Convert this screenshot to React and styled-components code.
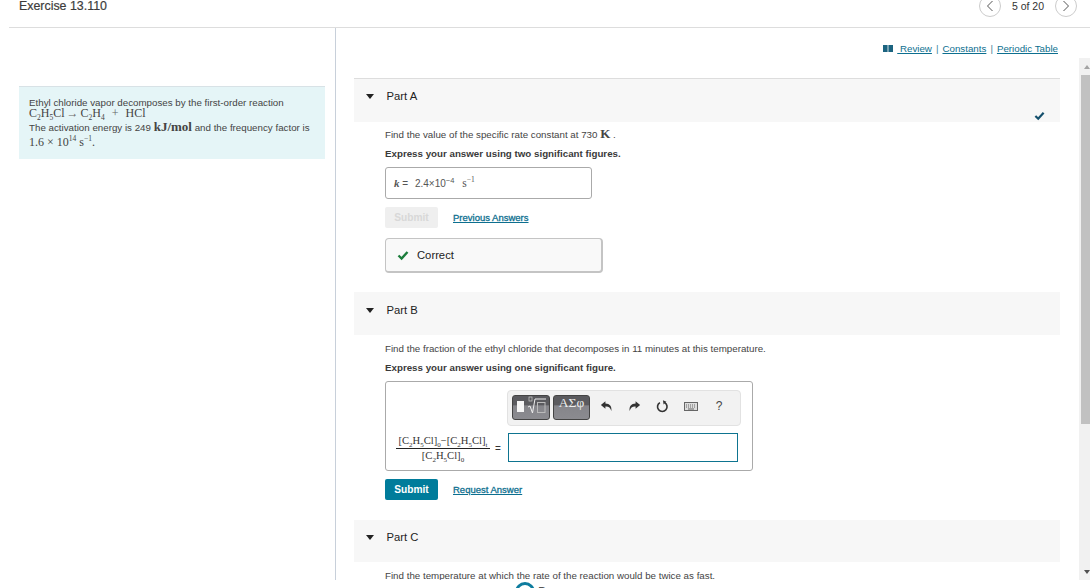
import styled, { createGlobalStyle } from "styled-components";
import { Fragment } from "react";

const Global = createGlobalStyle`
  html, body { margin: 0; padding: 0; background: #fff; overflow: hidden; }
  body { font-family: "Liberation Sans", Arial, sans-serif; color: #333; }
`;

const Page = styled.div`
  width: 1090px;
  height: 588px;
  overflow: hidden;
  display: flex;
  flex-direction: column;
`;
const Header = styled.header`
  height: 28px;
  box-sizing: border-box;
  margin-left: 9px;
  border-bottom: 1px solid #ddd;
  display: flex;
  align-items: flex-start;
  justify-content: space-between;
  flex: none;
`;
const Title = styled.div`
  margin-left: 10px;
  font-size: 12.4px;
  line-height: 12px;
  color: #3c3c3c;
  -webkit-text-stroke: 0.2px #3c3c3c;
`;
const Pager = styled.div`
  display: flex;
  align-items: flex-start;
  margin: -5px 13px 0 0;
  font-size: 10.5px;
  color: #333;
`;
const PageLabel = styled.span`
  margin: 5px 11px 0 11px;
  line-height: 12px;
`;
const PageButton = styled.span`
  width: 20px;
  height: 20px;
  border: 1px solid #ccc;
  border-radius: 50%;
  display: flex;
  align-items: center;
  justify-content: center;
  svg { display: block; }
`;
const Body = styled.div`
  height: 552px;
  display: flex;
  flex: none;
`;
const LeftPane = styled.aside`
  width: 336px;
  flex: none;
  box-sizing: border-box;
  padding: 58px 10px 0 19px;
  border-right: 1px solid #c8d0da;
`;
const Intro = styled.div`
  background: #e5f5f7;
  border-top: 1px solid #d8e2e6;
  height: 73px;
  box-sizing: border-box;
  padding: 10px 10px 0 10px;
  font-size: 9.75px;
  color: #444;
`;
const IntroLine = styled.div`
  line-height: ${p => p.$lh}px;
  white-space: nowrap;
`;
const MathRow = styled.div`
  font-family: "Liberation Serif", serif;
  font-size: 12px;
  line-height: ${p => p.$lh}px;
  color: #444;
  white-space: nowrap;
  sub, sup { font-size: 7.5px; line-height: 0; }
`;
const Op = styled.span`
  margin: 0 ${p => p.$gap}px;
  color: #666;
`;
const M = styled.span`
  font-family: "Liberation Serif", serif;
  font-size: ${p => p.$size || 12}px;
  font-style: ${p => (p.$italic ? "italic" : "normal")};
  font-weight: ${p => (p.$bold ? 700 : 400)};
  sup { font-size: 7.5px; line-height: 0; }
`;
const RightPane = styled.main`
  flex: 1;
  min-width: 0;
  display: flex;
  justify-content: space-between;
`;
const Content = styled.div`
  width: 724px;
  height: 552px;
  overflow: hidden;
  flex: none;
`;
const TopLinks = styled.div`
  height: 50px;
  padding: 15px 2px 0 0;
  box-sizing: border-box;
  display: flex;
  justify-content: flex-end;
  font-size: 9.75px;
  line-height: 12px;
  color: #3d7f99;
  svg { margin-top: 2px; }
`;
const TextLink = styled.a`
  color: #0d6f8f;
  text-decoration: underline;
  margin-left: ${p => p.$ml || 0}px;
  font-size: ${p => (p.$strong ? 9.5 : 9.75)}px;
  -webkit-text-stroke: ${p => (p.$strong ? "0.3px #0d6f8f" : "0")};
  white-space: pre;
`;
const Sep = styled.span`
  margin: 0 4px;
`;
const Part = styled.section`
  margin-left: 18px;
  width: 706px;
`;
const PartBar = styled.div`
  height: ${p => p.$h}px;
  background: #f7f7f7;
  border-top: ${p => (p.$line ? "1px solid #ddd" : "0")};
  position: relative;
  display: flex;
  align-items: flex-start;
  padding: ${p => p.$top}px 0 0 12px;
  box-sizing: border-box;
  font-size: 11.25px;
  line-height: 13px;
  color: #222;
`;
const Caret = styled.span`
  width: 0;
  height: 0;
  border-left: 4.5px solid transparent;
  border-right: 4.5px solid transparent;
  border-top: 5px solid #222;
  margin: 4px 12.5px 0 0;
`;
const DoneTick = styled.span`
  position: absolute;
  right: 15px;
  bottom: 1px;
  line-height: 0;
`;
const PartBody = styled.div`
  padding: ${p => p.$top}px 0 0 31px;
  height: ${p => p.$h}px;
  box-sizing: border-box;
`;
const Prompt = styled.div`
  font-size: 9.75px;
  line-height: 12px;
  color: #444;
  white-space: nowrap;
`;
const Instruction = styled.div`
  font-size: 9.75px;
  font-weight: 700;
  line-height: 12px;
  margin-top: 7px;
  color: #3a3a3a;
`;
const AnswerBox = styled.div`
  width: 207px;
  height: 32px;
  margin-top: 7px;
  border: 1px solid #aaa;
  border-radius: 3px;
  box-sizing: border-box;
  padding: 0 0 0 8px;
  font-size: 10px;
  line-height: 30px;
  color: #555;
  white-space: nowrap;
  sup { font-size: 7.5px; line-height: 0; }
`;
const Gap = styled.span`
  margin-left: ${p => p.$w}px;
`;
const Actions = styled.div`
  display: flex;
  align-items: center;
  margin-top: ${p => p.$mt}px;
`;
const SubmitButton = styled.span`
  width: 53px;
  height: 21px;
  border-radius: 2px;
  display: flex;
  align-items: center;
  justify-content: center;
  font-size: 10.2px;
  font-weight: 700;
  background: ${p => (p.$off ? "#efefef" : "#007c9b")};
  color: ${p => (p.$off ? "#d8d8d8" : "#fff")};
  margin-right: 15px;
`;
const Feedback = styled.div`
  width: 218px;
  height: 35px;
  margin-top: 10px;
  border: 1px solid #c4c4c4;
  border-right-width: 2px;
  border-bottom-width: 2px;
  border-radius: 4px;
  background: #f9f9f9;
  display: flex;
  align-items: center;
  padding-left: 11px;
  box-sizing: border-box;
  font-size: 11.25px;
  color: #222;
  svg { margin-right: 8px; }
`;
const EditorBox = styled.div`
  width: 368px;
  height: 90px;
  margin-top: 7px;
  border: 1px solid #aaa;
  border-radius: 3px;
  box-sizing: border-box;
  padding: 8px 0 0 7px;
`;
const Toolbar = styled.div`
  width: 234px;
  height: 36px;
  margin-left: 114px;
  background: #f2f2f2;
  border: 1px solid #e2e2e2;
  border-radius: 4px;
  box-sizing: border-box;
  display: flex;
  align-items: center;
  padding-left: 4px;
`;
const PaletteButton = styled.span`
  width: ${p => p.$w}px;
  height: 25px;
  margin: 0 3px 1px 0;
  border-radius: 3px;
  border: 1px solid #444;
  box-sizing: border-box;
  background: linear-gradient(#5b5b5f 0, #5b5b5f 40%, #85858a 42%, #8b8b90 100%);
  color: #eee;
  display: flex;
  align-items: flex-start;
  justify-content: center;
  font-family: "Liberation Serif", serif;
  font-size: 13.5px;
  line-height: 1;
  white-space: nowrap;
`;
const PaletteGlyph = styled.svg`
  display: block;
  flex: none;
`;
const Tools = styled.div`
  display: flex;
  align-items: center;
  margin: 0 0 4px -1px;
`;
const ToolIcon = styled.span`
  width: 28.25px;
  display: flex;
  justify-content: center;
  font-size: 12px;
  color: #444;
`;
const EquationRow = styled.div`
  display: flex;
  align-items: center;
  margin-top: 7px;
`;
const Fraction = styled.div`
  width: 94px;
  margin-left: 3px;
  text-align: center;
  font-family: "Liberation Serif", serif;
  font-size: 10.6px;
  color: #333;
  sub { font-size: 7px; line-height: 0; }
`;
const FractionTop = styled.div`
  border-bottom: 1px solid #222;
  line-height: 13px;
  padding-bottom: 1px;
  white-space: nowrap;
`;
const FractionBottom = styled.div`
  line-height: 13px;
`;
const EqualSign = styled.span`
  font-size: 10px;
  margin: 2px 7px 0 5px;
  color: #333;
`;
const MathInput = styled.div`
  width: 230px;
  height: 29px;
  border: 1px solid #0e7490;
  box-sizing: border-box;
  background: #fff;
`;
const Scrollbar = styled.div`
  width: 11px;
  margin-top: 30px;
  height: 522px;
  background: #f1f1f1;
  display: flex;
  flex-direction: column;
  align-items: flex-end;
  flex: none;
`;
const ScrollArrow = styled.span`
  height: 17px;
  width: 7px;
  flex: none;
  display: flex;
  align-items: center;
  justify-content: center;
  &::before {
    content: "";
    border-left: 3.5px solid transparent;
    border-right: 3.5px solid transparent;
    ${p => (p.$down ? "border-top: 4px solid #505050;" : "border-bottom: 4px solid #a3a3a3;")}
  }
`;
const ScrollThumb = styled.div`
  width: 9px;
  height: 349px;
  flex: none;
  background: #c1c1c1;
`;
const ScrollGap = styled.div`
  flex: 1;
`;
const Footer = styled.footer`
  height: 8px;
  flex: none;
  overflow: hidden;
  display: flex;
  align-items: flex-start;
  padding: 2px 0 0 515px;
  box-sizing: border-box;
`;
const FooterLogo = styled.span`
  width: 20px;
  height: 20px;
  flex: none;
  border: 3px solid #0d7c9e;
  border-radius: 50%;
  box-sizing: border-box;
`;
const FooterName = styled.span`
  margin: 3px 0 0 3px;
  font-size: 12px;
  line-height: 14px;
  color: #555;
`;

const Tick = ({ color = "#1f6f43", size = 12 }) => (
  <svg width={size} height={size} viewBox="0 0 12 12">
    <path d="M1.5 6.5 L4.6 9.5 L10.5 3" fill="none" stroke={color} strokeWidth="2.4" />
  </svg>
);
const Chevron = ({ dir }) => (
  <svg width="8" height="12" viewBox="0 0 8 12">
    <path d={dir === "left" ? "M6.5 1 L1.5 6 L6.5 11" : "M1.5 1 L6.5 6 L1.5 11"} fill="none" stroke="#555" strokeWidth="1" />
  </svg>
);
const BookIcon = () => (
  <svg width="10" height="7" viewBox="0 0 10 7">
    <path d="M0 0h4.6v7H0zM5.4 0H10v7H5.4z" fill="#1c6480" />
  </svg>
);
const RootGlyph = () => (
  <PaletteGlyph width="36" height="23" viewBox="0 0 36 23">
    <rect x="4" y="5" width="7" height="11" fill="#f6f6f6" />
    <path d="M15 11 L17 10 L19.5 17 L22 3 L33 3" fill="none" stroke="#eee" strokeWidth="1" />
    <rect x="16" y="1" width="3" height="4" fill="none" stroke="#ccc" strokeWidth="0.7" />
    <rect x="24.5" y="6.5" width="7.5" height="10" fill="none" stroke="#bbb" strokeWidth="1" />
  </PaletteGlyph>
);
const UndoIcon = () => (
  <svg width="13" height="12" viewBox="0 0 12 11">
    <path d="M5 1 L0.8 4.6 L5 8 V6 C8 5.8 9.5 7 10.5 10 C11 5.5 9 3.4 5 3.2 Z" fill="#333" />
  </svg>
);
const RedoIcon = () => (
  <svg width="13" height="12" viewBox="0 0 12 11">
    <path d="M7 1 L11.2 4.6 L7 8 V6 C4 5.8 2.5 7 1.5 10 C1 5.5 3 3.4 7 3.2 Z" fill="#333" />
  </svg>
);
const ResetIcon = () => (
  <svg width="13" height="13" viewBox="0 0 12 12">
    <path d="M8 2.4 A4.4 4.4 0 1 1 3.6 2.4" fill="none" stroke="#333" strokeWidth="1.5" />
    <path d="M6.4 0.2 L9.6 1.6 L7 4.2 Z" fill="#333" />
  </svg>
);
const KeyboardIcon = () => (
  <svg width="14" height="9" viewBox="0 0 14 9">
    <rect x="0.5" y="0.5" width="13" height="8" fill="#ddd" stroke="#666" />
    <path d="M2 3h10M2 5h10" stroke="#666" strokeWidth="1" strokeDasharray="1 1" />
    <path d="M4 7h6" stroke="#666" />
  </svg>
);

const links = ["\u00a0Review", "Constants", "Periodic Table"];

export default function App() {
  return (
    <Page>
      <Global />
      <Header>
        <Title>Exercise 13.110</Title>
        <Pager>
          <PageButton><Chevron dir="left" /></PageButton>
          <PageLabel>5 of 20</PageLabel>
          <PageButton><Chevron dir="right" /></PageButton>
        </Pager>
      </Header>
      <Body>
        <LeftPane>
          <Intro>
            <IntroLine $lh={12}>Ethyl chloride vapor decomposes by the first-order reaction</IntroLine>
            <MathRow $lh={9}>
              C<sub>2</sub>H<sub>5</sub>Cl<Op $gap={2}>→</Op>C<sub>2</sub>H<sub>4</sub><Op $gap={7}>+</Op>HCl
            </MathRow>
            <IntroLine $lh={17}>
              The activation energy is 249 <M $bold $size={13}>kJ/mol</M> and the frequency factor is
            </IntroLine>
            <MathRow $lh={12}>
              1.6 × 10<sup>14</sup> s<sup>−1</sup>.
            </MathRow>
          </Intro>
        </LeftPane>
        <RightPane>
          <Content>
            <TopLinks>
              <BookIcon />
              {links.map((l, i) => (
                <Fragment key={l}>
                  {i > 0 && <Sep>|</Sep>}
                  <TextLink $ml={i === 0 ? 4 : 0}>{l}</TextLink>
                </Fragment>
              ))}
            </TopLinks>
            <Part>
              <PartBar $h={44} $top={11} $line>
                <Caret />
                Part A
                <DoneTick><Tick color="#14506d" size={11} /></DoneTick>
              </PartBar>
              <PartBody $top={6} $h={170}>
                <Prompt>Find the value of the specific rate constant at 730 <M $bold $size={13}>K</M> .</Prompt>
                <Instruction>Express your answer using two significant figures.</Instruction>
                <AnswerBox>
                  <M $italic $bold $size={11}>k</M> = <Gap $w={4} />2.4×10<sup>−4</sup><Gap $w={8} /><M $size={11.5}>s<sup>−1</sup></M>
                </AnswerBox>
                <Actions $mt={8}>
                  <SubmitButton $off>Submit</SubmitButton>
                  <TextLink $strong>Previous Answers</TextLink>
                </Actions>
                <Feedback>
                  <Tick color="#1c7d3c" />
                  Correct
                </Feedback>
              </PartBody>
            </Part>
            <Part>
              <PartBar $h={43} $top={12}>
                <Caret />
                Part B
              </PartBar>
              <PartBody $top={8} $h={185}>
                <Prompt>Find the fraction of the ethyl chloride that decomposes in 11 minutes at this temperature.</Prompt>
                <Instruction>Express your answer using one significant figure.</Instruction>
                <EditorBox>
                  <Toolbar>
                    <PaletteButton $w={38}><RootGlyph /></PaletteButton>
                    <PaletteButton $w={37}>ΑΣφ</PaletteButton>
                    <Tools>
                      <ToolIcon><UndoIcon /></ToolIcon>
                      <ToolIcon><RedoIcon /></ToolIcon>
                      <ToolIcon><ResetIcon /></ToolIcon>
                      <ToolIcon><KeyboardIcon /></ToolIcon>
                      <ToolIcon>?</ToolIcon>
                    </Tools>
                  </Toolbar>
                  <EquationRow>
                    <Fraction>
                      <FractionTop>[C<sub>2</sub>H<sub>5</sub>Cl]<sub>0</sub>−[C<sub>2</sub>H<sub>5</sub>Cl]<sub>t</sub></FractionTop>
                      <FractionBottom>[C<sub>2</sub>H<sub>5</sub>Cl]<sub>0</sub></FractionBottom>
                    </Fraction>
                    <EqualSign>=</EqualSign>
                    <MathInput />
                  </EquationRow>
                </EditorBox>
                <Actions $mt={8}>
                  <SubmitButton>Submit</SubmitButton>
                  <TextLink $strong>Request Answer</TextLink>
                </Actions>
              </PartBody>
            </Part>
            <Part>
              <PartBar $h={42} $top={11}>
                <Caret />
                Part C
              </PartBar>
              <PartBody $top={8} $h={30}>
                <Prompt>Find the temperature at which the rate of the reaction would be twice as fast.</Prompt>
              </PartBody>
            </Part>
          </Content>
          <Scrollbar>
            <ScrollArrow />
            <ScrollThumb />
            <ScrollGap />
            <ScrollArrow $down />
          </Scrollbar>
        </RightPane>
      </Body>
      <Footer>
        <FooterLogo />
        <FooterName>Pearson</FooterName>
      </Footer>
    </Page>
  );
}
